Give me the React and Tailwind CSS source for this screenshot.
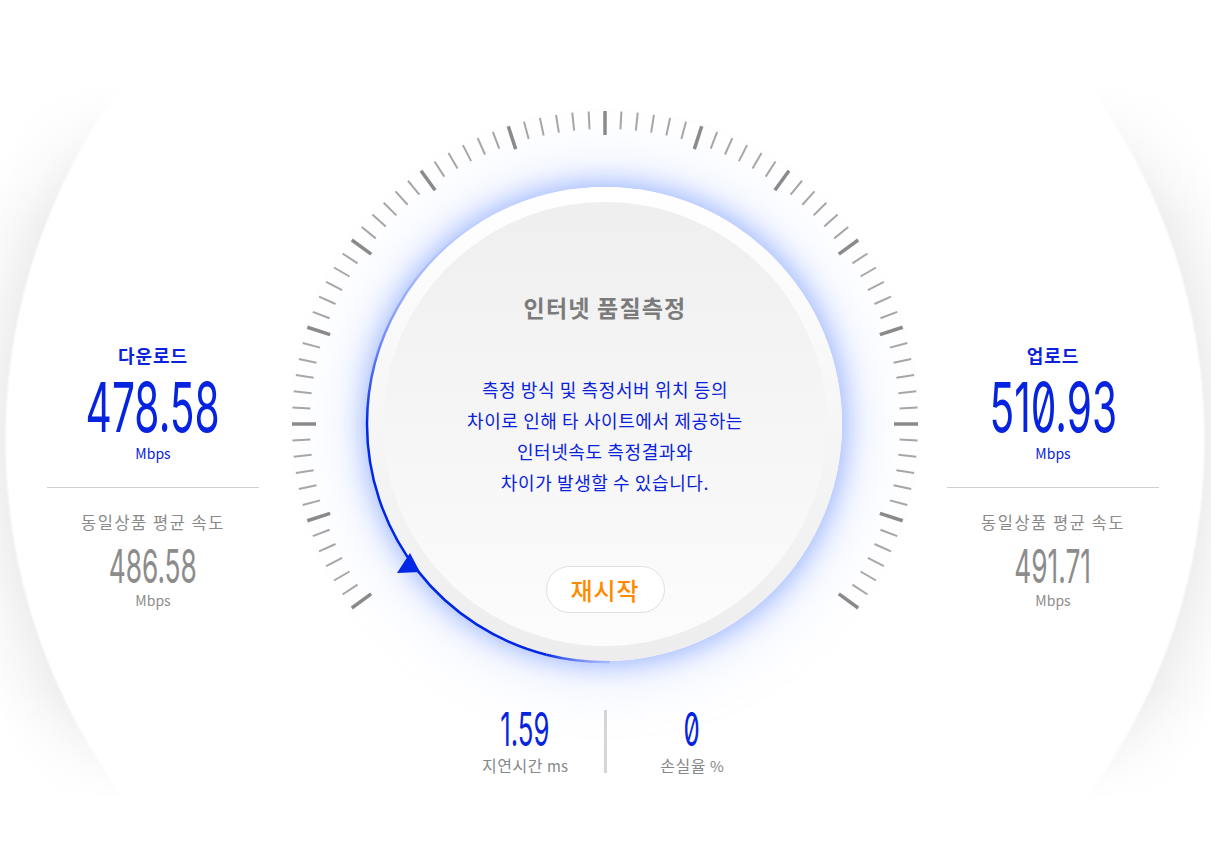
import React from "react";

// 게이지 눈금: -126° ~ +126°, 3도 간격, 18도마다 굵은 눈금
const ticks = Array.from({ length: 85 }, (_, i) => {
    const deg = -126 + i * 3;
    const rad = (deg * Math.PI) / 180;
    const major = i % 6 === 0;
    const r1 = 313;
    const r2 = major ? 289 : 295;
    return {
        x1: 320 + r1 * Math.sin(rad),
        y1: 320 - r1 * Math.cos(rad),
        x2: 320 + r2 * Math.sin(rad),
        y2: 320 - r2 * Math.cos(rad),
        major,
    };
});

const SpeedColumn = ({ title, value, avg, className }) => (
    <div className={`w-[212px] shrink-0 flex flex-col items-center pt-[241px] ${className}`}>
        <div className="text-[18px] leading-[20px] font-bold tracking-[1px] text-[#0a22dc]">{title}</div>
        <div className="mt-[8px] h-[69px] text-[69px] leading-[69px] font-['Inter',sans-serif] slashed-zero text-[#0624e0]">
            <span className="inline-block scale-x-[0.59]">{value}</span>
        </div>
        <div className="mt-[3px] text-[14px] leading-[16px] text-[#0a22dc]">Mbps</div>
        <div className="mt-[26px] w-full h-px bg-[#cfcfcf]" />
        <div className="mt-[24px] text-[16.5px] leading-[20px] tracking-[1.5px] text-[#8a8a8a]">동일상품 평균 속도</div>
        <div className="mt-[10px] h-[47px] text-[47px] leading-[47px] font-['Inter',sans-serif] slashed-zero text-[#8c8c8c]">
            <span className="inline-block scale-x-[0.56]">{avg}</span>
        </div>
        <div className="mt-[3px] text-[14px] leading-[16px] text-[#8c8c8c]">Mbps</div>
    </div>
);

const Gauge = () => (
    <div className="relative w-[640px] h-[600px] shrink-0 flex justify-center pt-[83px]">
        {/* 원판 + 파란 글로우 */}
        <div className="w-[474px] h-[474px] rounded-full bg-linear-to-b from-white to-[#ededed] p-[15px] shadow-[0_0_22px_6px_rgba(100,140,255,0.48),0_0_60px_18px_rgba(150,180,255,0.25)]">
            <div className="w-full h-full rounded-full bg-linear-to-b from-[#efefef] to-[#fcfcfc] flex flex-col items-center pt-[92px]">
                <div className="text-[23px] leading-[26px] font-bold tracking-[1.2px] text-[#7b7b7b]">인터넷 품질측정</div>
                <div className="mt-[54px] text-[18px] leading-[31px] tracking-[0.6px] text-center text-[#0a22dc]">
                    <p>측정 방식 및 측정서버 위치 등의</p>
                    <p>차이로 인해 타 사이트에서 제공하는</p>
                    <p>인터넷속도 측정결과와</p>
                    <p>차이가 발생할 수 있습니다.</p>
                </div>
                <button
                    type="button"
                    className="mt-[68px] w-[119px] h-[47px] rounded-full border border-[#e0e0e0] bg-white text-[24px] font-medium tracking-[1px] text-[#ff8a00]"
                >
                    재시작
                </button>
            </div>
        </div>

        {/* 눈금과 진행 호 */}
        <svg className="absolute left-0 top-0 w-[640px] h-[640px] pointer-events-none" viewBox="0 0 640 640">
            <defs>
                <linearGradient id="tail" gradientUnits="userSpaceOnUse" x1="82" y1="320" x2="201" y2="114">
                    <stop offset="0" stopColor="#0026e6" stopOpacity="1" />
                    <stop offset="0.35" stopColor="#3a55f0" stopOpacity="0.55" />
                    <stop offset="1" stopColor="#8da0ff" stopOpacity="0" />
                </linearGradient>
                <linearGradient id="head" gradientUnits="userSpaceOnUse" x1="260" y1="552" x2="330" y2="558">
                    <stop offset="0" stopColor="#0026e6" stopOpacity="1" />
                    <stop offset="1" stopColor="#6f86ff" stopOpacity="0.2" />
                </linearGradient>
            </defs>
            {ticks.map((t, i) => (
                <line
                    key={i}
                    x1={t.x1}
                    y1={t.y1}
                    x2={t.x2}
                    y2={t.y2}
                    stroke={t.major ? "#8a8a8a" : "#a6a6a6"}
                    strokeWidth={t.major ? 3.5 : 2}
                />
            ))}
            <path d="M82 320 A238 238 0 0 1 201 114" fill="none" stroke="url(#tail)" strokeWidth="2.5" />
            <path d="M261.4 550.7 A238 238 0 0 1 82 320" fill="none" stroke="#0026e6" strokeWidth="2.5" />
            <path d="M325 557.9 A238 238 0 0 1 261.4 550.7" fill="none" stroke="url(#head)" strokeWidth="2.5" />
            <polygon points="112,469 125,449 135,468" fill="#0026e6" />
        </svg>
    </div>
);

const SubStat = ({ value, label, unit, className }) => (
    <div className={`flex flex-col items-center ${className}`}>
        <div className="h-[46px] text-[46px] leading-[46px] font-['Inter',sans-serif] slashed-zero text-[#0624e0]">
            <span className="inline-block scale-x-[0.56]">{value}</span>
        </div>
        <div className="mt-[3px] text-[16px] leading-[20px] tracking-[0.5px] text-[#888888]">
            {label} <span className="text-[15px] tracking-normal">{unit}</span>
        </div>
    </div>
);

export default function App() {
    return (
        <div className="w-full h-[841px] overflow-hidden pt-[104px] font-['Noto_Sans_CJK_KR','Noto_Sans',sans-serif] bg-[linear-gradient(to_bottom,#fff_0px,#fff_85px,rgba(255,255,255,0)_220px,rgba(255,255,255,0)_690px,#fff_800px),radial-gradient(circle_700px_at_605px_440px,#fff_598px,#efefef_601px,#f7f7f7_625px,#fff_665px)]">
            <div className="flex items-start pl-[47px]">
                <SpeedColumn title="다운로드" value="478.58" avg="486.58" />
                <div className="ml-[26px]">
                    <Gauge />
                </div>
                <SpeedColumn title="업로드" value="510.93" avg="491.71" className="ml-[22px]" />
            </div>

            <div className="flex justify-center mt-[2px]">
                <SubStat value="1.59" label="지연시간" unit="ms" className="w-[158px] ml-[12px]" />
                <div className="mt-[4px] w-[3px] h-[63px] bg-[#d6d6d6]" />
                <SubStat value="0" label="손실율" unit="%" className="w-[170px]" />
            </div>
        </div>
    );
}
